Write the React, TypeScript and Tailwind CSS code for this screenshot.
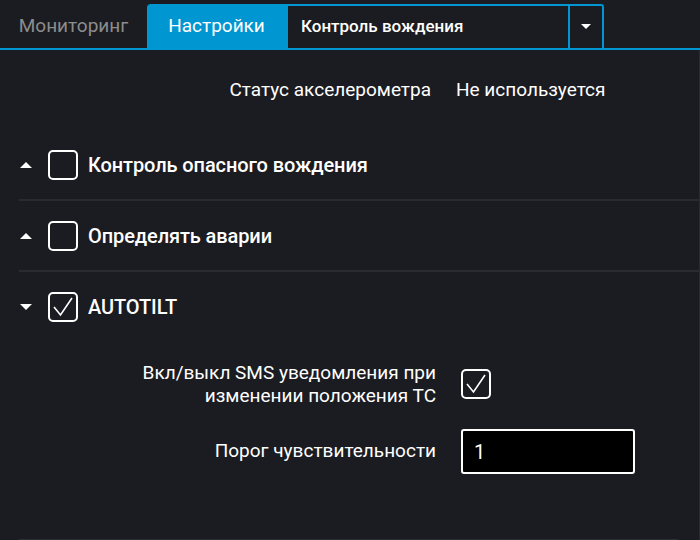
import { useState } from "react";

function Caret({ up }: { up: boolean }) {
  return (
    <svg width="14" height="8" viewBox="0 0 14 8" className="shrink-0">
      {up ? <path d="M1 7 L7 1 L13 7 Z" fill="#fff" /> : <path d="M1 1 L7 7 L13 1 Z" fill="#fff" />}
    </svg>
  );
}

function Check({ checked }: { checked: boolean }) {
  return (
    <div className="w-[30px] h-[30px] rounded-[5px] border-2 border-white flex items-center justify-center shrink-0">
      {checked && (
        <svg width="22" height="22" viewBox="0 0 22 22">
          <path d="M2 11 L8.5 19 L20 2" stroke="#fff" strokeWidth="1.6" fill="none" />
        </svg>
      )}
    </div>
  );
}

function Section({ title, open, checked }: { title: string; open: boolean; checked: boolean }) {
  return (
    <div className="flex items-center h-[69px] pl-[19px]">
      <Caret up={!open} />
      <div className="ml-[15px]">
        <Check checked={checked} />
      </div>
      <span className="ml-[10px] text-[20px] font-medium text-white tracking-[-0.1px]">{title}</span>
    </div>
  );
}

export default function App() {
  const [threshold, setThreshold] = useState("1");

  return (
    <div className="w-[700px] h-[540px] bg-[#1b1c21] font-['Roboto',sans-serif] relative overflow-hidden">
      {/* Tabs */}
      <div className="flex items-end h-[50px] border-b-2 border-[#0096d1]">
        <div className="w-[147px] h-[44px] flex items-center justify-center text-[19px] text-[#8c8c8c]">
          Мониторинг
        </div>
        <div className="w-[139px] h-[44px] flex items-center justify-center text-[19px] text-white bg-[#0096d1] rounded-tl-[4px]">
          Настройки
        </div>
        <div className="w-[318px] h-[44px] flex border-2 border-b-0 border-[#0096d1] rounded-tr-[3px]">
          <div className="flex-1 flex items-center pl-[13px] text-[17px] font-medium text-white">
            Контроль вождения
          </div>
          <div className="w-[34px] border-l-2 border-[#0096d1] flex items-center justify-center">
            <svg width="10" height="6" viewBox="0 0 10 6">
              <path d="M0 0 L10 0 L5 5 Z" fill="#fff" />
            </svg>
          </div>
        </div>
      </div>

      {/* Accelerometer status */}
      <div className="flex items-center h-[80px] text-[19px] text-white">
        <span className="w-[431px] text-right">Статус акселерометра</span>
        <span className="ml-[25px]">Не используется</span>
      </div>

      <Section title="Контроль опасного вождения" open={false} checked={false} />
      <div className="ml-[19px] h-[2px] bg-[#2a2b30]" />
      <Section title="Определять аварии" open={false} checked={false} />
      <div className="ml-[19px] h-[2px] bg-[#2a2b30]" />
      <Section title="AUTOTILT" open={true} checked={true} />

      {/* AUTOTILT settings */}
      <div className="flex items-center mt-[20px] text-[19px] text-white">
        <span className="w-[436px] text-right leading-[23px]">
          Вкл/выкл SMS уведомления при
          <br />
          изменении положения ТС
        </span>
        <div className="ml-[25px]">
          <Check checked={true} />
        </div>
      </div>
      <div className="flex items-center mt-[22px] text-[19px] text-white">
        <span className="w-[436px] text-right">Порог чувствительности</span>
        <input
          value={threshold}
          onChange={(e) => setThreshold(e.target.value)}
          className="ml-[25px] w-[174px] h-[45px] bg-black border-2 border-white rounded-[3px] px-[11px] text-[20px] text-white outline-none"
        />
      </div>

      {/* bottom edges */}
      <div className="absolute left-[19px] right-[22px] bottom-0 h-px bg-[#2e2f34]" />
      <div className="absolute right-0 top-[50px] bottom-0 w-px bg-[#2a2b30]" />
    </div>
  );
}
